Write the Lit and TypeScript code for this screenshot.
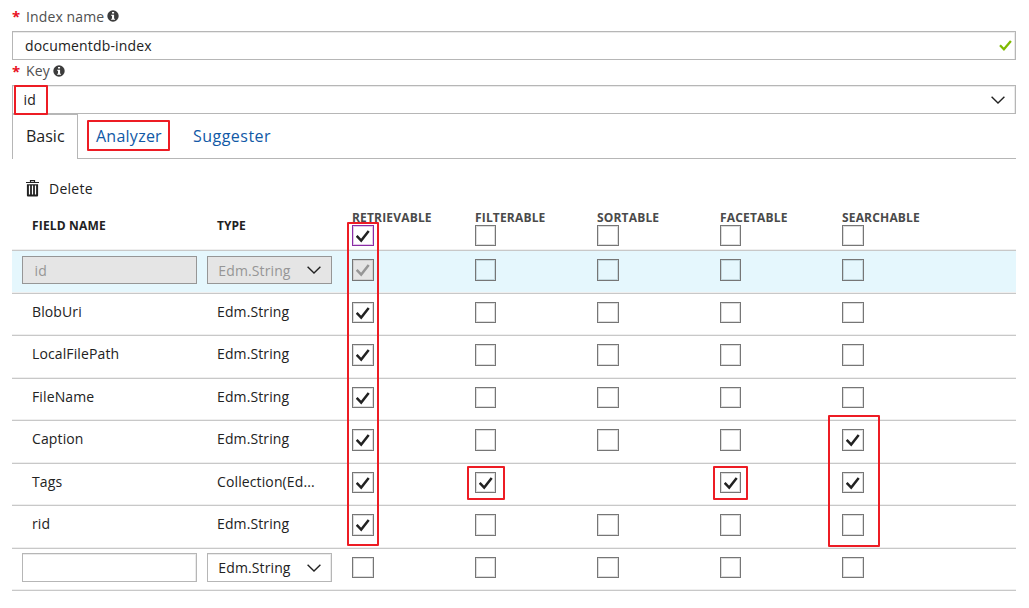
import { LitElement, html, css, svg, nothing } from "lit";
import { classMap } from "lit/directives/class-map.js";

type Cell = 0 | 1 | 2 | 3; // 0 empty, 1 checked, 2 disabled and checked, 3 no checkbox
interface Row { name: string; type: string; mode?: "locked" | "new"; cells: Cell[] }

const ROWS: Row[] = [
  { name: "id", type: "Edm.String", mode: "locked", cells: [2, 0, 0, 0, 0] },
  { name: "BlobUri", type: "Edm.String", cells: [1, 0, 0, 0, 0] },
  { name: "LocalFilePath", type: "Edm.String", cells: [1, 0, 0, 0, 0] },
  { name: "FileName", type: "Edm.String", cells: [1, 0, 0, 0, 0] },
  { name: "Caption", type: "Edm.String", cells: [1, 0, 0, 0, 1] },
  { name: "Tags", type: "Collection(Ed...", cells: [1, 1, 3, 1, 1] },
  { name: "rid", type: "Edm.String", cells: [1, 0, 0, 0, 0] },
  { name: "", type: "Edm.String", mode: "new", cells: [0, 0, 0, 0, 0] },
];
const FLAGS = ["RETRIEVABLE", "FILTERABLE", "SORTABLE", "FACETABLE", "SEARCHABLE"];

const tick = svg`<path d="M.7 5.9 L5.2 10.6 L12.7 1" fill="none" stroke="currentColor" stroke-width="2.5"/>`;
const chevron = html`<svg class="chev" width="14" height="8" viewBox="0 0 14 8"><path d="M.6 .7 L7 7 L13.4 .7" fill="none" stroke="#222" stroke-width="1.4"/></svg>`;
const info = html`<svg class="info" width="12" height="12" viewBox="0 0 11 11"><circle cx="5.5" cy="5.5" r="5.2" fill="#3c3c3c"/><path d="M4.6 1.8h1.9v1.5H4.6zM3.8 4.3h2.7v3.7h.8v1H3.8v-1h.8V5.3h-.8z" fill="#fff"/></svg>`;

class AppRoot extends LitElement {
  static styles = css`
    :host { display: block; position: relative; box-sizing: border-box; width: 1029px; height: 608px; padding: 5px 13px 0 12px; background: #fff; color: #222; font: 14px "Open Sans", "Noto Sans", sans-serif; letter-spacing: .12px; overflow: hidden; }
    * { box-sizing: border-box; }
    svg { display: block; flex: none; }
    .label { display: flex; align-items: center; height: 22px; color: #505050; padding-left: 0; }
    .label b { width: 14px; color: #e81123; font-size: 15px; line-height: 22px; height: 22px; }
    .label .info { margin-left: 3px; }
    .box { display: flex; align-items: center; justify-content: space-between; border: 1px solid #b6b6b6; box-shadow: inset -1px 1px #ebebeb; background: #fff; }
    .wide { height: 29px; padding: 0 10px 0 11px; }
    .name { margin-top: 4px; padding: 0 3px 0 12px; letter-spacing: .16px; }
    .key { margin-top: 4px; padding-left: 10.5px; }
    .name + .label { margin-top: -1px; height: 23px; }
    .name + .label + .key { margin-top: 3px; }
    .ok { color: #7fba00; }
    .tabs { display: flex; height: 45px; font-size: 16px; line-height: 45px; letter-spacing: 0; color: #1159a6; }
    .tab { border-bottom: 1px solid #b6b6b6; }
    .tab.on { width: 66px; padding-left: 13px; line-height: 43px; color: #222; border: 1px solid #b6b6b6; border-bottom: 0; }
    .tab.an { padding-left: 18px; width: 115px; letter-spacing: .25px; }
    .tab.su { flex: 1; letter-spacing: .47px; }
    .delete { display: flex; align-items: center; gap: 10px; height: 59px; padding-left: 14px; letter-spacing: .25px; }
    .grid { display: grid; grid-template-columns: 195px 145px 123px 122px 123px 122px 1fr; border-bottom: 1px solid #c8c8c8; box-shadow: inset 0 -1px #efefef; align-items: start; }
    .head { height: 33px; font-size: 12px; font-weight: 700; letter-spacing: .17px; color: #4a4a4a; }
    .head .main { line-height: 17px; margin-top: -1px; color: #222; }
    .head .main:first-child { padding-left: 20px; }
    .head .main + .main { padding-left: 10px; letter-spacing: 0; }
    .flag { display: flex; flex-direction: column; margin-top: -7px; line-height: 14px; }
    .row { height: 43px; line-height: 35px; }
    .row.odd { height: 42px; }
    .row.locked { background: #e5f7fd; }
    .txt { padding-left: 20px; }
    .txt + .txt { padding-left: 10px; }
    .field { height: 29px; margin: 4px 0 0 10px; padding: 0 10px 0 11.5px; width: 175px; line-height: 27px; }
    .field.sel { width: 125px; margin-left: 0; padding-left: 10.3px; }
    .locked .field { height: 28px; margin-top: 5px; background: #e5e5e5; border-color: #969696; box-shadow: none; color: #969696; }
    .cb { width: 22px; height: 22px; border: 1px solid #767676; box-shadow: inset 0 0 0 1px #ddd; padding: 4px 0 0 3px; color: #222; }
    .row .cb { margin-top: 8px; }
    .cb.short { height: 21px; }
    .cb.thin { width: 21px; }
    .locked .cb { box-shadow: inset 0 0 0 1px #c5d8de; }
    .locked .cb.off { background: #e5e5e5; color: #969696; box-shadow: inset 0 0 0 1px #d0d0d0; }
    .cb.focus { border-color: #8a2da5; box-shadow: inset 0 0 0 1px #e3c8ea; }
    .mark { position: absolute; border: 2px solid #ed1c24; border-radius: 1px; }
    .m-key { left: 14px; top: 85px; width: 34px; height: 30px; }
    .m-an { left: 87px; top: 120px; width: 83px; height: 31px; }
    .m-ret { left: 347px; top: 222px; width: 32px; height: 324px; }
    .m-fil { left: 467px; top: 466px; width: 38px; height: 34px; }
    .m-fac { left: 713px; top: 466px; width: 35px; height: 34px; }
    .m-sea { left: 828px; top: 415px; width: 52px; height: 132px; }
  `;

  box(cell: Cell, col: number, short: boolean, focus = false) {
    if (cell === 3) return html`<span></span>`;
    return html`<div class=${classMap({ cb: true, short, thin: col % 2 === 1, off: cell === 2, focus })}>
      ${cell ? html`<svg width="14" height="13" viewBox="0 0 14 13">${tick}</svg>` : nothing}</div>`;
  }

  row(r: Row, i: number) {
    return html`<div class="grid row ${i % 2 ? "odd" : ""} ${r.mode ?? ""}">
      ${r.mode
        ? html`<div class="box field">${r.name}</div><div class="box field sel">${r.type}${chevron}</div>`
        : html`<div class="txt">${r.name}</div><div class="txt">${r.type}</div>`}
      ${r.cells.map((c, j) => this.box(c, j, i % 2 === 1))}
    </div>`;
  }

  render() {
    return html`
      <div class="label"><b>*</b>Index name${info}</div>
      <div class="box wide name">documentdb-index<svg class="ok" width="13" height="11" viewBox="0 0 13 11"><path d="M1 5.3 L4.9 9.2 L11.9 1" fill="none" stroke="currentColor" stroke-width="2.3"/></svg></div>
      <div class="label"><b>*</b>Key${info}</div>
      <div class="box wide key">id${chevron}</div>
      <div class="tabs"><div class="tab on">Basic</div><div class="tab an">Analyzer</div><div class="tab su">Suggester</div></div>
      <div class="delete"><svg width="13" height="17" viewBox="0 0 13 17"><path d="M4.5 2V.6h4V2M0 2.5h13" fill="none" stroke="#222" stroke-width="1.2"/><path d="M.9 4.3h11.2V15.5q0 1-1 1H1.9q-1 0-1-1z" fill="#222"/><path d="M3.5 5.5v9M6.5 5.5v9M9.5 5.5v9" stroke="#fff" stroke-width="1.2"/></svg>Delete</div>
      <div class="grid head"><div class="main">FIELD NAME</div><div class="main">TYPE</div>
        ${FLAGS.map((f, j) => html`<div class="flag">${f}${this.box(j ? 0 : 1, j, true, j === 0)}</div>`)}</div>
      ${ROWS.map((r, i) => this.row(r, i))}
      ${["key", "an", "ret", "fil", "fac", "sea"].map((m) => html`<div class="mark m-${m}"></div>`)}
    `;
  }
}
customElements.define("app-root", AppRoot);
